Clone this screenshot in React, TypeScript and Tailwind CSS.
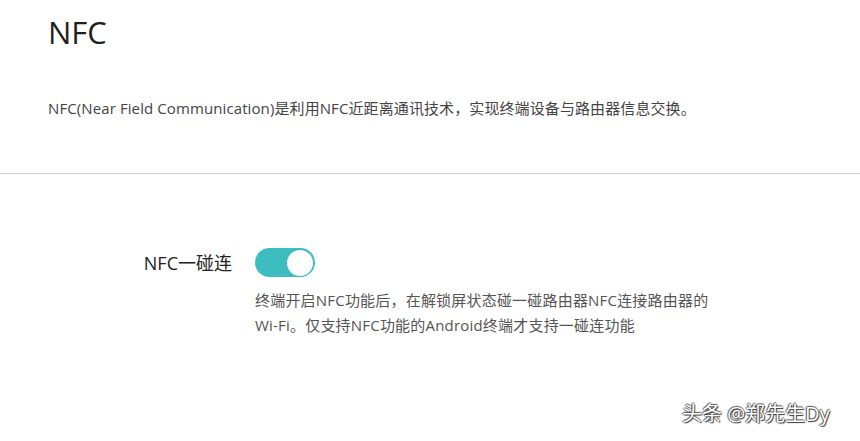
import React, { useState } from 'react';

const font = { fontFamily: '"Open Sans", "Noto Sans CJK SC", sans-serif' };

export default function App() {
    const [on, setOn] = useState(true);

    return (
        <div className="relative w-[860px] h-[441px] bg-white overflow-hidden" style={font}>
            {/* HEADER */}
            <div className="px-[48px] pt-[12px] h-[174px] border-b border-[#cfcfcf]">
                <h1 className="text-[31px] leading-[40px] text-[#1f1f1f]">NFC</h1>
                <p className="mt-[46px] text-[15px] leading-[20px] tracking-[0.1px] text-[#444]">
                    NFC(Near Field Communication)是利用NFC近距离通讯技术，实现终端设备与路由器信息交换。
                </p>
            </div>

            {/* SETTING ROW */}
            <div className="flex pt-[74px]">
                <div className="w-[233px] pr-[1px] text-right text-[18px] leading-[28px] text-[#222] pt-[1px]">
                    NFC一碰连
                </div>
                <div className="ml-[22px]">
                    <button
                        onClick={() => setOn(!on)}
                        className={`flex items-center w-[60px] h-[29px] rounded-full px-[2px] ${
                            on ? 'bg-[#3dbdc0] justify-end' : 'bg-[#ccc] justify-start'
                        }`}
                    >
                        <span className="block w-[26px] h-[26px] rounded-full bg-white" />
                    </button>
                    <p className="mt-[11px] text-[15px] leading-[25px] tracking-[0.2px] text-[#555] w-[480px]">
                        终端开启NFC功能后，在解锁屏状态碰一碰路由器NFC连接路由器的
                        <br />
                        Wi-Fi。仅支持NFC功能的Android终端才支持一碰连功能
                    </p>
                </div>
            </div>

            {/* WATERMARK */}
            <div
                className="absolute left-[682px] top-[400px] text-[20px] leading-[28px] text-white"
                style={{ textShadow: '1px 1px 1px #333, -1px 0 1px #555, 0 -1px 1px #555' }}
            >
                头条 @郑先生Dy
            </div>
        </div>
    );
}
